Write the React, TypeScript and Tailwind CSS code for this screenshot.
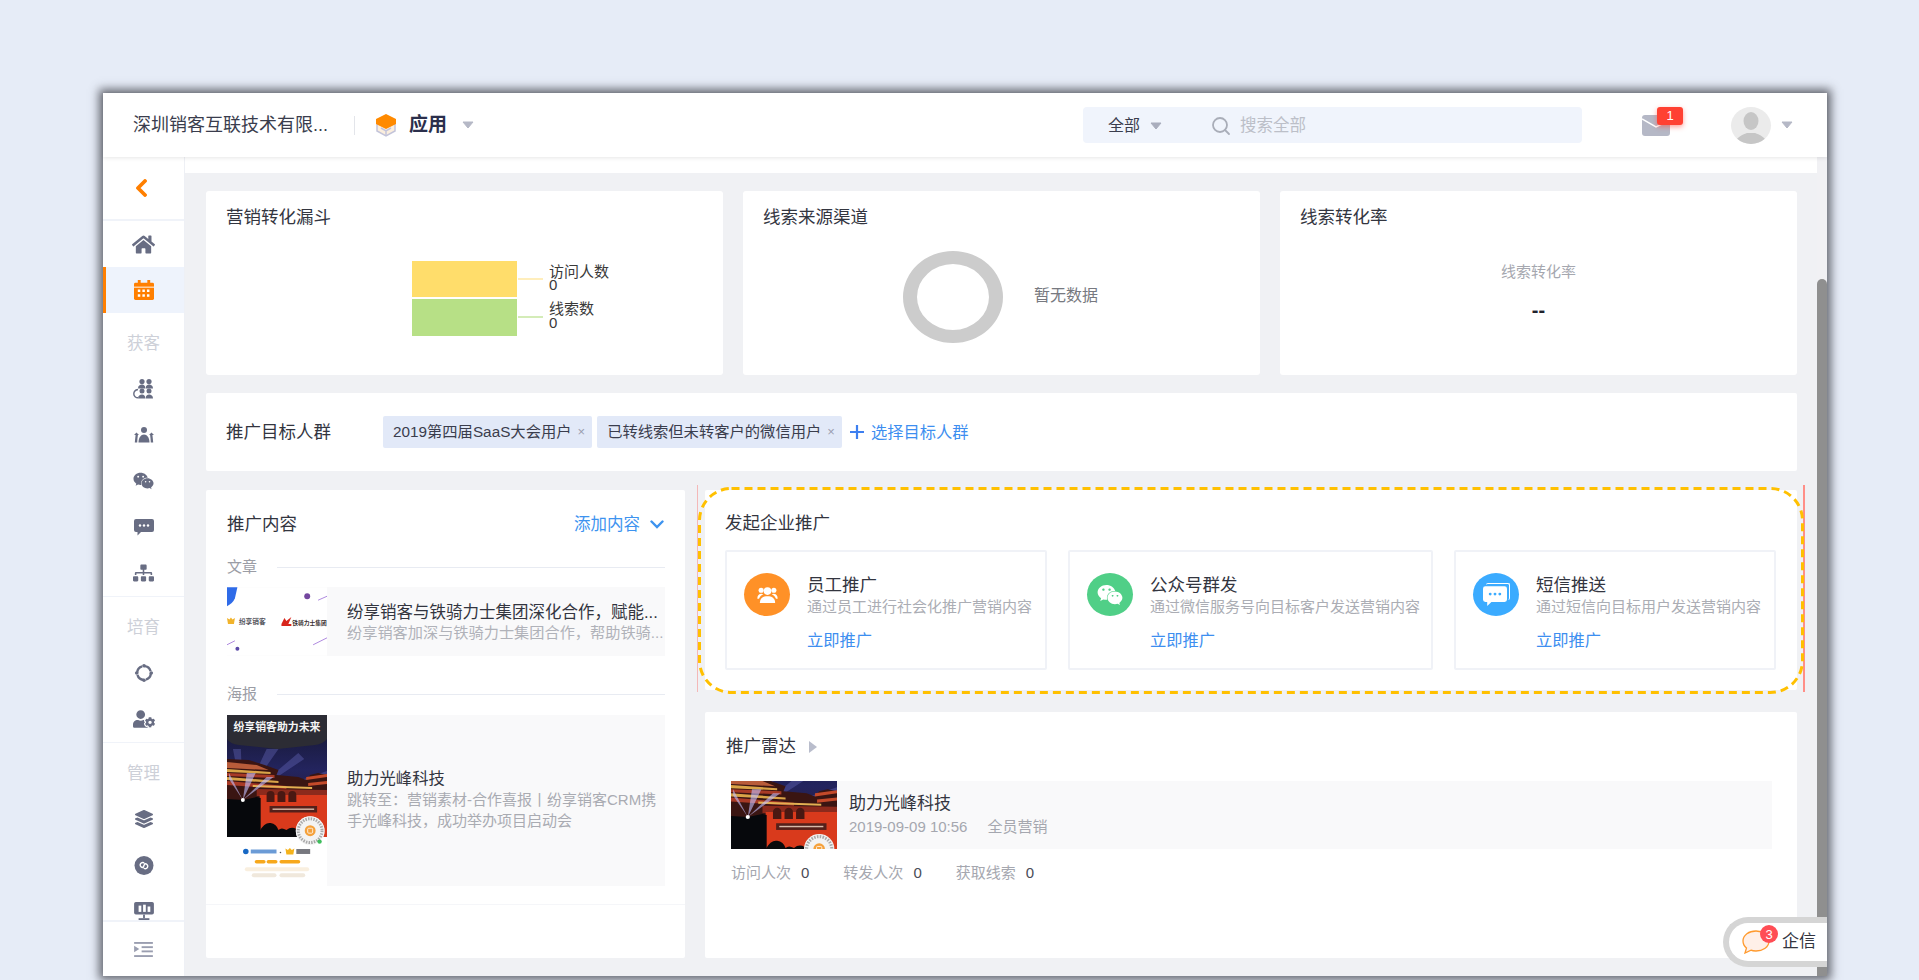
import type { ReactNode } from "react";
import { FaHome, FaLayerGroup, FaSitemap, FaUserCog, FaWeixin } from "react-icons/fa";

function Caret({ className }: { className?: string }) {
  return (
    <svg viewBox="0 0 12 8" className={className} aria-hidden="true">
      <path d="M1 1h10L6 7z" fill="currentColor" stroke="currentColor" strokeLinejoin="round" />
    </svg>
  );
}

function BoxLogo() {
  return (
    <svg viewBox="0 0 24 24" className="h-[24px] w-[24px]" aria-hidden="true">
      <path d="M3 9v9l9 5 9-5V9z" fill="#fbeedd" stroke="#c3c4da" strokeWidth="1.5" />
      <path d="M7 15l5 3 5-3M12 18v4" fill="none" stroke="#c3c4da" strokeWidth="1.5" />
      <path d="M12 1l10 5v5l-10 5-10-5V6z" fill="#ff8a00" />
    </svg>
  );
}

function GroupLoop() {
  return (
    <svg viewBox="0 0 22 20" className="h-[20px] w-[22px]" fill="#686d83" aria-hidden="true">
      <circle cx="9" cy="2.600" r="2.600" />
      <circle cx="16" cy="2.600" r="2.600" />
      <path d="M5 9.500c0-3 2-4 4-4s3.300 1 3.300 4zM12.700 9.500c0-3 1.500-4 3.300-4s4 1 4 4z" />
      <circle cx="9" cy="12" r="2.500" />
      <circle cx="16" cy="12" r="2.500" />
      <path d="M5 19.500c0-3 2-4 4-4s3.300 1 3.300 4zM12.700 19.500c0-3 1.500-4 3.300-4s4 1 4 4z" />
      <path d="M5 10.500C2 11 .8 13 .8 15s2 3.800 4.200 3.800" fill="none" stroke="#686d83" strokeWidth="1.400" />
    </svg>
  );
}

function PeopleArms() {
  return (
    <svg viewBox="0 0 22 16" className="h-[16px] w-[22px]" fill="#686d83" aria-hidden="true">
      <circle cx="11" cy="3" r="3" />
      <path d="M5.500 15.500c0-5 2.500-8 5.500-8s5.500 3 5.500 8z" />
      <path d="M3.500 5.500L1 8h1.600c-.3 2.500-.6 5-.8 7.500h2.400c.1-2.500.3-5 .7-7.500H6z" />
      <path d="M18.500 5.500L21 8h-1.600c.3 2.500.6 5 .8 7.500h-2.400c-.1-2.500-.3-5-.7-7.500H16z" />
    </svg>
  );
}

function SmsBubble({ fill, dot, className }: { fill: string; dot: string; className: string }) {
  return (
    <svg viewBox="0 0 20 17" className={className} aria-hidden="true">
      <path d="M2 0h16a2 2 0 0 1 2 2v9a2 2 0 0 1-2 2H7l-3.500 3.500V13H2a2 2 0 0 1-2-2V2a2 2 0 0 1 2-2z" fill={fill} />
      <circle cx="6" cy="6.500" r="1.200" fill={dot} />
      <circle cx="10" cy="6.500" r="1.200" fill={dot} />
      <circle cx="14" cy="6.500" r="1.200" fill={dot} />
    </svg>
  );
}

function RingArrows() {
  return (
    <svg viewBox="0 0 22 22" className="h-[20px] w-[20px]" fill="none" aria-hidden="true">
      <circle cx="11" cy="11" r="7.500" stroke="#686d83" strokeWidth="2.600" strokeDasharray="9.500 2.300" />
      <circle cx="11" cy="3" r="2" fill="#686d83" />
      <circle cx="19" cy="11" r="2" fill="#686d83" />
      <circle cx="11" cy="19" r="2" fill="#686d83" />
      <circle cx="3" cy="11" r="2" fill="#686d83" />
    </svg>
  );
}

function MiniProgram() {
  return (
    <svg viewBox="0 0 20 20" className="h-[19px] w-[20px]" aria-hidden="true">
      <circle cx="10" cy="10" r="10" fill="#686d83" />
      <path
        d="M8.500 7.500a2.600 2.600 0 1 0 1.500 4.700V8a2.600 2.600 0 1 1 1.500 4.700"
        fill="none"
        stroke="#fff"
        strokeWidth="1.500"
        strokeLinecap="round"
        transform="rotate(25 10 10)"
      />
    </svg>
  );
}

function ScreenBars() {
  return (
    <svg viewBox="0 0 22 20" className="h-[18px] w-[20px]" aria-hidden="true">
      <rect x="0" y="0" width="22" height="14" rx="2" fill="#686d83" />
      <rect x="5" y="4" width="3" height="7" fill="#fff" />
      <rect x="10" y="3" width="3" height="8" fill="#fff" />
      <rect x="15" y="5" width="3" height="6" fill="#fff" />
      <rect x="10" y="14" width="2" height="4" fill="#686d83" />
      <rect x="5" y="18" width="12" height="2" fill="#686d83" />
    </svg>
  );
}

function CalendarIcon() {
  return (
    <svg viewBox="0 0 21 21" className="h-[20px] w-[20px]" aria-hidden="true">
      <rect x="0" y="3" width="21" height="18" rx="1.500" fill="#ff7f00" />
      <rect x="4" y="0" width="3" height="5" fill="#ff7f00" />
      <rect x="14" y="0" width="3" height="5" fill="#ff7f00" />
      <rect x="0" y="7" width="21" height="1" fill="#fff" />
      {[4, 8.800, 13.600].map((x) => (
        <g key={x} fill="#fff">
          <rect x={x} y="10" width="2.600" height="2.600" />
          <rect x={x} y="15" width="2.600" height="2.600" />
        </g>
      ))}
    </svg>
  );
}

function CollapseIcon() {
  return (
    <svg viewBox="0 0 20 16" className="h-[15px] w-[19px]" fill="#9a9eb0" aria-hidden="true">
      <rect x="0" y="0" width="20" height="2" />
      <rect x="8" y="4.500" width="12" height="2" />
      <rect x="8" y="9" width="12" height="2" />
      <rect x="0" y="14" width="20" height="2" />
      <path d="M0 4l5.500 3.500L0 11z" />
    </svg>
  );
}

function NavRow({ children, active }: { children: ReactNode; active?: boolean }) {
  return (
    <div
      className={`flex h-[46px] shrink-0 items-center justify-center ${
        active ? "border-l-[3px] border-[#ff7f00] bg-[#eef3fc] pr-[3px]" : ""
      }`}
    >
      {children}
    </div>
  );
}

function NavLabel({ children }: { children: ReactNode }) {
  return (
    <div className="flex h-[53px] shrink-0 items-center justify-center pt-[8px] text-[16.500px] text-[#cdd0d8]">
      {children}
    </div>
  );
}

function Sidebar() {
  return (
    <aside className="flex w-[82px] shrink-0 flex-col border-r border-[#eef0f5] bg-white">
      <div className="min-h-0 flex-1 overflow-hidden">
        <div className="flex h-[64px] items-center justify-center border-b-2 border-[#f0f3f9] pr-[6px]">
          <svg viewBox="0 0 12 18" className="h-[18px] w-[12px]" fill="none" aria-hidden="true">
            <path d="M10 2L3 9l7 7" stroke="#ff7f00" strokeWidth="3.800" strokeLinecap="round" strokeLinejoin="round" />
          </svg>
        </div>
        <NavRow>
          <FaHome className="h-[21px] w-[23px] text-[#686d83]" />
        </NavRow>
        <NavRow active>
          <CalendarIcon />
        </NavRow>
        <NavLabel>获客</NavLabel>
        <NavRow>
          <GroupLoop />
        </NavRow>
        <NavRow>
          <PeopleArms />
        </NavRow>
        <NavRow>
          <FaWeixin className="h-[20px] w-[21px] text-[#686d83]" />
        </NavRow>
        <NavRow>
          <SmsBubble fill="#686d83" dot="#fff" className="h-[17px] w-[20px]" />
        </NavRow>
        <NavRow>
          <FaSitemap className="h-[18px] w-[21px] text-[#686d83]" />
        </NavRow>
        <div className="h-px bg-[#f0f3f9]" />
        <NavLabel>培育</NavLabel>
        <NavRow>
          <RingArrows />
        </NavRow>
        <NavRow>
          <FaUserCog className="h-[18px] w-[22px] text-[#686d83]" />
        </NavRow>
        <div className="h-px bg-[#f0f3f9]" />
        <NavLabel>管理</NavLabel>
        <NavRow>
          <FaLayerGroup className="h-[18px] w-[20px] text-[#686d83]" />
        </NavRow>
        <NavRow>
          <MiniProgram />
        </NavRow>
        <NavRow>
          <ScreenBars />
        </NavRow>
      </div>
      <div className="flex h-[56px] shrink-0 items-center justify-center border-t-2 border-[#f0f3f9]">
        <CollapseIcon />
      </div>
    </aside>
  );
}

function Header() {
  return (
    <header className="relative z-10 flex h-[64px] shrink-0 items-center bg-white pl-[30px] pr-[34px] shadow-[0_1px_4px_rgba(0,0,0,0.1)]">
      <span className="w-[195px] whitespace-nowrap text-[18px] text-[#3a3d4d]">深圳销客互联技术有限...</span>
      <span className="ml-[26px] h-[19px] w-px bg-[#e3e5ea]" />
      <span className="ml-[19px]">
        <BoxLogo />
      </span>
      <span className="ml-[11px] text-[19px] font-bold text-[#2b2f4c]">应用</span>
      <Caret className="ml-[15px] h-[8px] w-[12px] text-[#b5b8c6]" />
      <div className="ml-auto flex h-[36px] w-[499px] items-center rounded-[4px] bg-[#f0f4fc] pt-px">
        <span className="ml-[25px] text-[16px] text-[#3a3d4d]">全部</span>
        <Caret className="ml-[10px] h-[8px] w-[12px] text-[#a9adbd]" />
        <svg viewBox="0 0 20 20" className="ml-[49px] h-[20px] w-[20px]" fill="none" aria-hidden="true">
          <circle cx="9" cy="9" r="7" stroke="#a9adb8" strokeWidth="1.800" />
          <path d="M14 14l4 4" stroke="#a9adb8" strokeWidth="1.800" strokeLinecap="round" />
        </svg>
        <span className="ml-[9px] text-[16.500px] text-[#bcbfc8]">搜索全部</span>
      </div>
      <div className="relative ml-[60px] h-[21px] w-[28px] rounded-[3px] bg-[#b5b8c6]">
        <svg viewBox="0 0 28 21" className="h-full w-full" fill="none" aria-hidden="true">
          <path d="M0 4l14 8 8-4" stroke="#fff" strokeWidth="1.500" />
        </svg>
        <span className="absolute -top-[8px] left-[15px] flex h-[18px] w-[26px] items-center justify-center rounded-[3px] bg-[#ff4132] text-[13px] leading-none text-white shadow-[0_2px_5px_rgba(255,65,50,0.5)]">
          1
        </span>
      </div>
      <div className="ml-[61px] h-[37px] w-[40px] overflow-hidden rounded-[50%] bg-[#ebebeb]">
        <svg viewBox="0 0 40 37" className="h-full w-full" fill="#c6c6c6" aria-hidden="true">
          <ellipse cx="20" cy="14" rx="7.500" ry="9" />
          <path d="M4 37c1-7 7-9 12-11h8c5 2 11 4 12 11z" />
        </svg>
      </div>
      <Caret className="ml-[10px] h-[8px] w-[12px] text-[#b5b8c6]" />
    </header>
  );
}

// the photo used by both the poster and the radar row
function PosterArt({ viewBox, className }: { viewBox: string; className: string }) {
  return (
    <svg viewBox={viewBox} preserveAspectRatio="none" className={className} aria-hidden="true">
      <defs>
        <linearGradient id="sky" x1="0" y1="0" x2="0" y2="1">
          <stop offset="0" stopColor="#14152a" />
          <stop offset="0.45" stopColor="#23245e" />
          <stop offset="0.75" stopColor="#2a1a3a" />
        </linearGradient>
      </defs>
      <rect x="0" y="0" width="101" height="122" fill="url(#sky)" />
      <path d="M16 85L40 34h12zM16 85L72 38l6 6zM16 85L101 56v7zM16 85L6 34h8z" fill="#6f72c8" opacity="0.35" />
      <path d="M0 0h101v24q-4 5-12 6l-38 4-39-4q-9-1-12-6z" fill="#2c2c34" />
      <path d="M0 44l22 1 16 5 14 5-2 5 22 2 8 3 4-5 8-2 9 2v30H0z" fill="#3a1512" />
      <path d="M0 47l30 3 12 5-42-2z" fill="#b85c3a" />
      <path d="M0 54l44 3v2L0 57zM0 62l52 4v2L0 65z" fill="#d9a448" />
      <path d="M0 58l48 2v3L0 61zM0 66l60 5v3L0 70z" fill="#a83a26" />
      <path d="M26 70l60 2v2l-60-2z" fill="#e3b052" />
      <path d="M30 74l71 1v6H30z" fill="#8c2a1c" />
      <path d="M80 62l21-3v3l-21 3zM82 68l19-2v3l-19 2z" fill="#c44a2a" />
      <path d="M33 80h68v42H33z" fill="#d93a1c" />
      <path d="M40 80a4 4 0 0 1 8 0v7h-8zM51 80a4 4 0 0 1 8 0v7h-8zM62 80a4 4 0 0 1 8 0v7h-8z" fill="#4a1812" />
      <path d="M0 84l16 1 14-3 4 1v39H0z" fill="#06080c" />
      <path d="M16 85L2 58v6zM16 85L20 58h9zM16 85L40 62h7z" fill="#c4c1ff" opacity="0.6" />
      <circle cx="16" cy="85" r="2" fill="#fff" />
      <rect x="43" y="91" width="48" height="6.500" fill="#54201a" />
      <rect x="46" y="93.500" width="42" height="1.400" fill="#d9b9a8" />
      <path d="M33 122v-6q5-9 11-8 6 1 8 7 3-3 8 0 5-4 10-1l5 8z" fill="#0a0a0c" />
      <circle cx="84" cy="116" r="14.500" fill="#f3f3f3" />
      <circle cx="84" cy="116" r="12" fill="none" stroke="#a9a9a9" strokeWidth="3" strokeDasharray="1.500 1.200" />
      <circle cx="84" cy="116" r="5.500" fill="#f5a13b" />
      <rect x="81.500" y="113.500" width="5" height="5" rx="1" fill="none" stroke="#fff" strokeWidth="0.800" />
    </svg>
  );
}

function PosterThumb() {
  return (
    <div className="relative h-[171px] w-[100px] shrink-0 bg-white">
      <PosterArt viewBox="0 0 101 122" className="block h-[122px] w-[100px]" />
      <svg viewBox="0 0 101 171" className="absolute inset-0 h-full w-full" aria-hidden="true">
        <text x="50.500" y="15.500" textAnchor="middle" fontSize="11" fontWeight="700" fill="#f5f5f5">
          纷享销客助力未来
        </text>
        <circle cx="84" cy="116" r="14.500" fill="#f3f3f3" />
        <circle cx="84" cy="116" r="12" fill="none" stroke="#a9a9a9" strokeWidth="3" strokeDasharray="1.500 1.200" />
        <circle cx="84" cy="116" r="5.500" fill="#f5a13b" />
        <rect x="81.500" y="113.500" width="5" height="5" rx="1" fill="none" stroke="#fff" strokeWidth="0.800" />
        <circle cx="93.500" cy="127" r="2.200" fill="#3ebd5c" />
        <circle cx="19" cy="137" r="2.800" fill="#1768c4" />
        <rect x="24" y="135" width="26" height="4" fill="#6b9bd6" />
        <circle cx="54" cy="138" r="0.800" fill="#555" />
        <path d="M59 134l2.500 1.500 2-2 2 2 2.500-1.500-1 6h-7z" fill="#f5b31b" />
        <rect x="70" y="134.500" width="14" height="5" fill="#77787f" />
        <rect x="28" y="145.500" width="11" height="3.600" rx="1.800" fill="#f7a81b" />
        <rect x="40" y="145.500" width="11" height="3.600" rx="1.800" fill="#f7a81b" />
        <rect x="53" y="145.500" width="21" height="3.600" rx="1.800" fill="#f7a81b" />
        <rect x="18" y="153" width="65" height="4" rx="2" fill="#f9efdf" />
        <rect x="25" y="159" width="25" height="4" rx="2" fill="#f0e8dc" />
        <rect x="53" y="159" width="26" height="4" rx="2" fill="#f0e8dc" />
      </svg>
    </div>
  );
}

function ArticleThumb() {
  return (
    <svg viewBox="0 0 101 69" className="h-[69px] w-[100px] shrink-0" aria-hidden="true">
      <rect width="101" height="69" fill="#fff" />
      <path d="M0 0h10.500L8 11q-2 5-8 8z" fill="#2f6be8" />
      <circle cx="81" cy="9" r="3" fill="#74479f" />
      <path d="M92 13l9-4M0 58l8-4M87 58l14-7" stroke="#9a6ad6" strokeWidth="0.800" />
      <circle cx="10.500" cy="62" r="2" fill="#5c4aa8" />
      <path d="M0 31l2.500 1.500 1.500-2 1.500 2 2.500-1.500-1 6H1z" fill="#f1b32b" />
      <text x="12" y="37" fontSize="6.800" fontWeight="700" fill="#55565d">
        纷享销客
      </text>
      <path d="M55 37l3-6 2 3 5-4-3 7h3v2h-10z" fill="#d8251c" />
      <text x="66" y="38" fontSize="5.800" fontWeight="700" fill="#3a2f2f">
        铁骑力士集团
      </text>
    </svg>
  );
}

function StatCard({ title, children }: { title: string; children: ReactNode }) {
  return (
    <section className="h-full min-w-0 flex-1 rounded-[3px] bg-white">
      <h3 className="px-[20px] pt-[14px] text-[17.500px] font-normal leading-[24px] text-[#33353f]">{title}</h3>
      {children}
    </section>
  );
}

function FunnelChart() {
  return (
    <svg viewBox="0 0 210 76" className="ml-[206px] mt-[32px] block h-[76px] w-[210px]" aria-hidden="true">
      <rect x="0" y="0" width="105" height="36" fill="#ffdd6b" />
      <rect x="0" y="38" width="105" height="37" fill="#b7e086" />
      <path d="M106 18h25" stroke="#ffe9a6" strokeWidth="1.500" />
      <path d="M106 56h25" stroke="#c6e6a0" strokeWidth="1.500" />
      <g fontSize="15" fill="#3a3a3a">
        <text x="137" y="16">访问人数</text>
        <text x="137" y="29">0</text>
        <text x="137" y="53">线索数</text>
        <text x="137" y="67">0</text>
      </g>
    </svg>
  );
}

function Tag({ children, padding }: { children: ReactNode; padding: string }) {
  return (
    <span className={`flex h-[32px] items-center gap-[6px] rounded-[2px] bg-[#e2e9f8] text-[15.300px] text-[#3a3d4d] ${padding}`}>
      {children}
      <span className="text-[13px] text-[#9a9eb0]">×</span>
    </span>
  );
}

function SectionLine({ label, className }: { label: string; className: string }) {
  return (
    <div className={`flex h-[18px] items-center ${className}`}>
      <span className="w-[50px] text-[15px] text-[#9b9da5]">{label}</span>
      <span className="h-px flex-1 bg-[#e8ebf2]" />
    </div>
  );
}

function ContentPanel() {
  return (
    <section className="flex h-full w-[479px] shrink-0 flex-col rounded-[2px] bg-white pl-[21px] pr-[20px]">
      <div className="flex h-[68px] shrink-0 items-center justify-between">
        <h3 className="text-[17.500px] font-normal text-[#33353f]">推广内容</h3>
        <span className="flex items-center gap-[10px] text-[16.500px] text-[#3d93ef]">
          添加内容
          <svg viewBox="0 0 14 9" className="mr-px h-[9px] w-[14px]" fill="none" aria-hidden="true">
            <path d="M1.500 1.500L7 7l5.500-5.500" stroke="#3d93ef" strokeWidth="2.400" strokeLinecap="round" />
          </svg>
        </span>
      </div>
      <SectionLine label="文章" className="" />
      <div className="mt-[11px] flex h-[69px] shrink-0 bg-[#f9f9fa]">
        <ArticleThumb />
        <div className="flex min-w-0 flex-1 flex-col justify-center pl-[20px]">
          <p className="whitespace-nowrap text-[16.500px] leading-[22px] text-[#33353f]">
            纷享销客与铁骑力士集团深化合作，赋能...
          </p>
          <p className="whitespace-nowrap text-[15.200px] leading-[20px] text-[#b0b2b9]">
            纷享销客加深与铁骑力士集团合作，帮助铁骑...
          </p>
        </div>
      </div>
      <SectionLine label="海报" className="mt-[29px]" />
      <div className="mt-[12px] flex h-[171px] shrink-0 bg-[#f9f9fa]">
        <PosterThumb />
        <div className="flex min-w-0 flex-1 flex-col justify-center pb-[4px] pl-[20px] pr-[6px]">
          <p className="text-[16.300px] leading-[22px] text-[#33353f]">助力光峰科技</p>
          <p className="text-[15px] leading-[21px] text-[#a9abb2]">
            跳转至：营销素材-合作喜报丨纷享销客CRM携手光峰科技，成功举办项目启动会
          </p>
        </div>
      </div>
      <div className="-ml-[21px] -mr-[20px] mt-[18px] h-px bg-[#f5f6f9]" />
    </section>
  );
}

function PromoCard({
  width,
  icon,
  iconBg,
  title,
  desc,
}: {
  width: string;
  icon: ReactNode;
  iconBg: string;
  title: string;
  desc: string;
}) {
  return (
    <div className={`flex h-[120px] shrink-0 rounded-[2px] border-2 border-[#f0f2f7] pl-[17px] pt-[21px] ${width}`}>
      <span className={`flex h-[43px] w-[46px] shrink-0 items-center justify-center rounded-[50%] ${iconBg}`}>{icon}</span>
      <div className="ml-[17px] min-w-0">
        <p className="text-[17.500px] leading-[24px] text-[#33353f]">{title}</p>
        <p className="whitespace-nowrap text-[15px] leading-[20px] text-[#abadb4]">{desc}</p>
        <p className="mt-[12px] text-[16.300px] leading-[22px] text-[#3d8ef0]">立即推广</p>
      </div>
    </div>
  );
}

function PromoPanel() {
  return (
    <section className="relative h-[200px] shrink-0 rounded-[2px] bg-white pl-[20px] pr-[21px]">
      <span className="absolute -left-[8px] -top-[5px] h-[207px] w-px bg-[#f4b8b8]" />
      <span className="absolute -right-[8px] -top-[5px] h-[207px] w-[2px] bg-[#ff8f88]" />
      {/* dashed highlight drawn over the panel */}
      <svg
        viewBox="0 0 1106 207"
        className="pointer-events-none absolute -left-[7px] -top-[3px] h-[207px] w-[1106px]"
        fill="none"
        aria-hidden="true"
      >
        <rect x="1.500" y="1.500" width="1103" height="204" rx="32" stroke="#ffc000" strokeWidth="3" strokeDasharray="8 5" />
      </svg>
      <h3 className="flex h-[60px] items-center pt-[6px] text-[17.500px] font-normal text-[#33353f]">发起企业推广</h3>
      <div className="flex justify-between">
        <PromoCard
          width="w-[322px]"
          iconBg="bg-[#ff9127]"
          title="员工推广"
          desc="通过员工进行社会化推广营销内容"
          icon={
            <svg viewBox="0 0 24 20" className="h-[17px] w-[21px]" fill="#fff" aria-hidden="true">
              <circle cx="12" cy="6" r="4.500" />
              <path d="M3 20c0-6 4-8 9-8s9 2 9 8z" />
              <circle cx="4.500" cy="5" r="3" />
              <circle cx="19.500" cy="5" r="3" />
              <path d="M0 15c0-4 2-6 5-6l2 1c-3 1-4 3-5 5zM24 15c0-4-2-6-5-6l-2 1c3 1 4 3 5 5z" />
            </svg>
          }
        />
        <PromoCard
          width="w-[365px]"
          iconBg="bg-[#50cf87]"
          title="公众号群发"
          desc="通过微信服务号向目标客户发送营销内容"
          icon={<FaWeixin className="h-[24px] w-[26px] text-white" />}
        />
        <PromoCard
          width="w-[322px]"
          iconBg="bg-[#3babff]"
          title="短信推送"
          desc="通过短信向目标用户发送营销内容"
          icon={
            <span className="relative block h-[24px] w-[27px]">
              <span className="absolute right-0 top-0 h-[17px] w-[24px] rounded-[2px] border-r border-t border-white" />
              <SmsBubble fill="#fff" dot="#3babff" className="absolute bottom-0 left-0 h-[21px] w-[24px]" />
            </span>
          }
        />
      </div>
    </section>
  );
}

function RadarPanel() {
  return (
    <section className="flex-1 rounded-[2px] bg-white pl-[21px] pr-[25px]">
      <div className="flex h-[69px] items-center">
        <h3 className="text-[17.500px] font-normal text-[#33353f]">推广雷达</h3>
        <svg viewBox="0 0 8 12" className="ml-[13px] h-[12px] w-[8px]" aria-hidden="true">
          <path d="M0 0l8 6-8 6z" fill="#b9bdcc" />
        </svg>
      </div>
      <div className="ml-[5px] flex h-[68px] bg-[#f9f9fa]">
        <PosterArt viewBox="0 50 101 66" className="block h-[68px] w-[106px] shrink-0" />
        <div className="flex flex-col justify-center pl-[12px]">
          <p className="text-[17px] leading-[24px] text-[#33353f]">助力光峰科技</p>
          <p className="text-[15px] leading-[22px] text-[#a5a7af]">
            2019-09-09 10:56<span className="ml-[20px]">全员营销</span>
          </p>
        </div>
      </div>
      <div className="ml-[5px] mt-[13px] flex text-[15px] leading-[22px]">
        {["访问人次", "转发人次", "获取线索"].map((label) => (
          <span key={label} className="mr-[34px] text-[#a5a7af]">
            {label}
            <span className="ml-[10px] text-[#4a4c57]">0</span>
          </span>
        ))}
      </div>
    </section>
  );
}

export default function App() {
  return (
    <div className="h-[980px] w-full overflow-hidden bg-[#e6ecf7] pl-[103px] pt-[93px] font-['Liberation_Sans','Noto_Sans_CJK_SC',sans-serif]">
      <div className="relative flex h-[883px] w-[1724px] flex-col bg-white shadow-[0_0_9px_4px_rgba(60,62,70,0.75)]">
        <Header />
        <div className="flex min-h-0 flex-1">
          <Sidebar />
          <main className="flex min-w-0 flex-1 flex-col bg-[#f0f1f4]">
            <div className="h-[16px] shrink-0 bg-white" />
            <div className="flex min-h-0 flex-1 flex-col pl-[21px] pr-[20px] pt-[18px]">
              <div className="flex h-[184px] shrink-0 gap-[20px]">
                <StatCard title="营销转化漏斗">
                  <FunnelChart />
                </StatCard>
                <StatCard title="线索来源渠道">
                  <div className="ml-[160px] mt-[22px] flex items-center">
                    <span className="h-[92px] w-[100px] rounded-[50%] border-x-[14px] border-y-[13px] border-[#cccccc]" />
                    <span className="-mt-[3px] ml-[31px] text-[16px] text-[#777980]">暂无数据</span>
                  </div>
                </StatCard>
                <StatCard title="线索转化率">
                  <div className="mt-[32px] text-center">
                    <p className="text-[15px] leading-[22px] text-[#a5a7af]">线索转化率</p>
                    <p className="mt-[15px] text-[20px] font-bold leading-[24px] text-[#20222c]">--</p>
                  </div>
                </StatCard>
              </div>
              <div className="mt-[18px] flex h-[78px] shrink-0 items-center rounded-[2px] bg-white px-[20px]">
                <span className="w-[157px] text-[17.500px] text-[#33353f]">推广目标人群</span>
                <div className="flex items-center gap-[5px]">
                  <Tag padding="pl-[10px] pr-[7px]">2019第四届SaaS大会用户</Tag>
                  <Tag padding="pl-[10px] pr-[7px]">已转线索但未转客户的微信用户</Tag>
                </div>
                <svg viewBox="0 0 16 16" className="ml-[7px] h-[16px] w-[16px]" aria-hidden="true">
                  <path d="M8 1v14M1 8h14" stroke="#3d7ff0" strokeWidth="2.200" />
                </svg>
                <span className="ml-[6px] text-[16.300px] text-[#3d8ef0]">选择目标人群</span>
              </div>
              <div className="mt-[19px] flex h-[468px] shrink-0 gap-[20px]">
                <ContentPanel />
                <div className="flex min-w-0 flex-1 flex-col gap-[22px]">
                  <PromoPanel />
                  <RadarPanel />
                </div>
              </div>
            </div>
          </main>
          <div className="flex w-[10px] shrink-0 flex-col bg-[#f1f1f4] pt-[122px]">
            <div className="flex-1 rounded-t-[5px] bg-[#8f8f8f]" />
          </div>
        </div>
        <div className="absolute bottom-[9px] right-0 flex h-[50px] w-[104px] items-center rounded-l-[25px] border-y-[6px] border-l-[6px] border-[#d5d5d5] bg-white pl-[13px]">
          <span className="relative block h-[24px] w-[28px]">
            <svg viewBox="0 0 28 24" className="h-full w-full" aria-hidden="true">
              <path
                d="M14 1c7 0 13 4 13 10s-6 10-13 10c-2 0-4-.3-5-.8L3 23l1.500-5C2 16 1 14 1 11 1 5 7 1 14 1z"
                fill="#fff0e8"
                stroke="#ff9a2e"
                strokeWidth="1.300"
              />
            </svg>
            <span className="absolute -top-[5px] left-[18px] flex h-[18px] w-[18px] items-center justify-center rounded-full bg-[#ff4d55] text-[13px] leading-none text-white">
              3
            </span>
          </span>
          <span className="ml-[12px] text-[17px] text-[#33353f]">企信</span>
        </div>
      </div>
    </div>
  );
}
